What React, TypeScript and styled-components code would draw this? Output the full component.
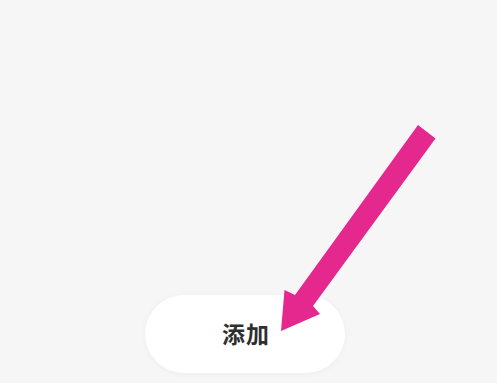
import React from "react";
import styled, { createGlobalStyle } from "styled-components";

const GlobalStyle = createGlobalStyle`
  html, body {
    margin: 0;
    padding: 0;
    background: #f7f6f7;
  }
  * { box-sizing: border-box; }
`;

const Screen = styled.div`
  position: relative;
  width: 497px;
  height: 383px;
  overflow: hidden;
  background: #f7f6f7;
  display: flex;
  flex-direction: column;
  justify-content: flex-end;
  align-items: flex-start;
  padding: 0 0 10px 145px;
`;

const AddButton = styled.button`
  width: 200px;
  height: 78px;
  border: none;
  border-radius: 39px;
  background: #ffffff;
  box-shadow: 0 1px 6px rgba(0, 0, 0, 0.04);
  display: flex;
  align-items: center;
  justify-content: center;
  font-family: "Noto Sans CJK SC", "Noto Sans", sans-serif;
  font-weight: 700;
  font-size: 23px;
  color: #2f2f2f;
  letter-spacing: 1px;
  padding: 0 0 3px 2px;
  cursor: pointer;
`;

const ArrowLayer = styled.svg`
  position: absolute;
  left: 0;
  top: 0;
  width: 497px;
  height: 383px;
  pointer-events: none;
`;

export default function App() {
  return (
    <>
      <GlobalStyle />
      <Screen>
        <AddButton>添加</AddButton>
        <ArrowLayer viewBox="0 0 497 383">
          <polygon
            points="418,125 435.5,138.5 313,306 320,314 281,331 284.5,290 295,295"
            fill="#e5288e"
          />
        </ArrowLayer>
      </Screen>
    </>
  );
}
